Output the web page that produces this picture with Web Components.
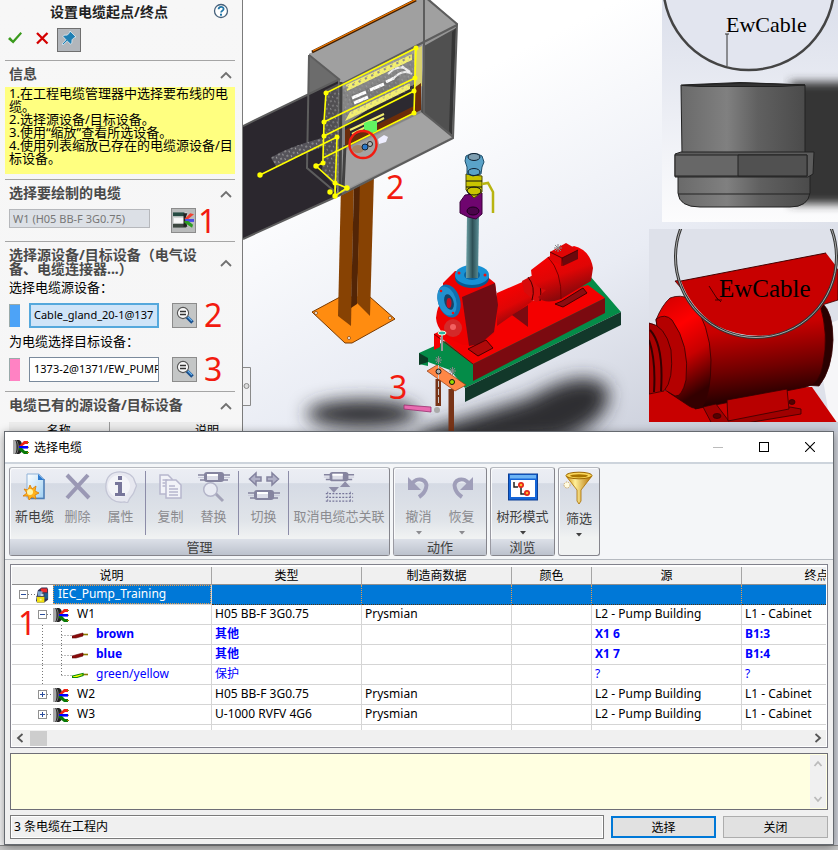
<!DOCTYPE html>
<html lang="zh-CN">
<head>
<meta charset="utf-8">
<title>选择电缆</title>
<style>
body{margin:0;font-family:"Noto Sans","Noto Sans CJK SC",sans-serif;font-size:12px;color:#000}
</style>
</head>
<body>
<cad-app></cad-app>
<script>
const define = (name, css, html, setup) => customElements.define(name, class extends HTMLElement {
  constructor() {
    super();
    this.attachShadow({mode: 'open'});
  }
  connectedCallback() {
    const t = document.createElement('template');
    t.innerHTML = `<style>*{box-sizing:border-box}${css}</style>` + (typeof html === 'function' ? html(this) : html);
    this.shadowRoot.replaceChildren(t.content.cloneNode(true));
    if (setup) setup(this);
  }
});

const plug = (a, b, y) => `<g transform="translate(0 ${y})"><path d="M0 4h32M2 9h28" stroke="${a}" stroke-width="1.5"/><path d="M0 6.500h32" stroke="#c9cada" stroke-width="1"/><rect x="6" y="1" width="20" height="10" rx="3" fill="${a}"/><rect x="9" y="3" width="11" height="6" fill="${b}"/><rect x="9" y="3" width="11" height="2" fill="#fff"/></g>`;
const ICONS = {
  help: ['0 0 16 16', `<circle cx="8" cy="8" r="6.500" fill="#fff" stroke="#45607a" stroke-width="1.300"/><path d="M5.600 6.300c0-3.300 5-3.200 5-.3 0 1.900-2.500 1.800-2.500 3.600" fill="none" stroke="#2277a8" stroke-width="1.800"/><rect x="7" y="10.700" width="2" height="2" fill="#2277a8"/>`],
  ok: ['0 0 16 16', `<path d="M1 9l2-2 3 3.200L13.500 2 15 3.500 6.200 13.500z" fill="#3a9a1c"/>`],
  cancel: ['0 0 16 16', `<path d="M3 3l10.500 10.500M13.500 3L3 13.500" stroke="#d40000" stroke-width="2.300"/>`],
  pin: ['0 0 16 16', `<path d="M9 1l6 6-1.600.4L11 9.800l-.2 3.400-1.400.8L6.200 11 2 15 1 14l4-4.200L2 6.500 3 5.200l3.300-.1L8.600 2.600z" fill="#1f7fb3" stroke="#eef6fb" stroke-width=".7"/>`],
  chevron: ['0 0 12 8', `<path d="M1 7l5-5 5 5" fill="none" stroke="#707070" stroke-width="1.800"/>`],
  cable: ['0 0 16 16', `<path d="M0 1h5c3 0 4 2 4 7s-1 7-4 7H0z" fill="#222"/><path d="M0 1h2c2 2 2 12 0 14H0z" fill="#aaa"/><path d="M3 1c3 3 3 11 0 14" stroke="#777" fill="none"/><path d="M6 7l5-5h4v3h-3L8 8z" fill="#e21"/><rect x="6" y="7" width="9" height="2.600" fill="#00f"/><path d="M6 9l3 0 3 3h3v3h-4L6 11z" fill="#087a08"/><path d="M14 3.500h2M15 8.300h1M14 13.500h2" stroke="#998000"/>`],
  cablepick: ['0 0 22 20', `<rect y="2" width="15" height="16" fill="#d5d7d6"/><rect y="2" width="12" height="4" fill="#254b42"/><rect x="1" y="8" width="11" height="5" fill="#f8f8f8"/><rect y="14" width="14" height="4" fill="#3c4740"/><path d="M11 3h4l-2 6 2 8h-4z" fill="#222"/><path d="M12 9l6-6 4 1-6 5z" fill="#f04030"/><rect x="13" y="9" width="9" height="3" fill="#4a48e8"/><path d="M12 11h4l5 4-1 3-8-5z" fill="#2d9b22"/>`],
  zoom: ['0 0 18 18', `<path d="M10.500 10.500l6 6" stroke="#194f8c" stroke-width="3.600"/><path d="M11.500 10.500l4.500 4.500" stroke="#6bb4ee" stroke-width="1.200"/><circle cx="7" cy="7" r="5.600" fill="#f6f6f6" stroke="#555" stroke-width="1.100"/><path d="M4 5.500h6M4 8.500h6" stroke="#333" stroke-width="1.400"/>`],
  newcable: ['0 0 32 32', `<defs><linearGradient id="g" x1="0" y1="0" x2="1" y2="1"><stop stop-color="#fff"/><stop offset="1" stop-color="#9fd0f2"/></linearGradient></defs><path d="M8 3h12l5 5v19H8z" fill="url(#g)" stroke="#8fb2d8"/><path d="M25 8v19.500H10" fill="none" stroke="#4d7eb5" stroke-width="1.500"/><path d="M19 3l6 6h-6z" fill="#2d7bd0"/><path d="M11 14l2 4 4-3-1 5 4 2-4 2 1 4-4-2-3 3-1-4-5 0 4-3-3-4 4 1z" fill="#ffb31c" stroke="#d97a00" stroke-width=".8"/><circle cx="11" cy="21" r="3" fill="#fff6a8"/>`],
  del: ['0 0 32 32', `<path d="M5 4l22 23M26 4L5 27" stroke="#9a98b4" stroke-width="4" fill="none"/>`],
  info: ['0 0 32 32', `<path d="M15 .8c8 0 13.500 4 14.500 9l2 5-2 5c-1 4-4 6-5 8l-2 4-3-1c-9 2-18.700-4-18.700-15S7 .8 15 .8z" fill="#e7e8f0" stroke="#c3c5d5" stroke-width="1.300"/><circle cx="14" cy="15" r="11" fill="#f3f4f8"/><path d="M13 5h4v4h-4zM10 11h7v11h3v3H10v-3h3v-8h-3z" fill="#77769a"/>`],
  copy: ['0 0 32 32', `<g fill="#f2f3f8" stroke="#b7b7cd" stroke-width="1.500"><path d="M5 4h8l4 4v15H5z"/><path d="M11 9h10l5 5v13H11z"/></g><path d="M7.500 9h5M7.500 12h3M7.500 15h3M14 15h6M14 18h9M14 21h9M14 24h9" stroke="#b7b7cd" stroke-width="1.300"/>`],
  replace: ['0 0 32 32', plug('#85849f', '#dcdde8', 0) + `<path d="M17 22l8 8" stroke="#a3a3b8" stroke-width="3"/><circle cx="12.500" cy="18.500" r="6.800" fill="#e9ebf3" stroke="#b3b4c8" stroke-width="1.500"/>`],
  swap: ['0 0 32 32', `<path d="M1.500 8L8 2v4h5v4H8v4zM30.500 8L24 2v4h-5v4h5v4z" fill="#b0b0c6" stroke="#84839f" stroke-width="1.500"/>` + plug('#85849f', '#dcdde8', 18)],
  unlink: ['0 0 32 34', plug('#85849f', '#dcdde8', 0) + `<path d="M5 17h11l-5.500 6zM17 17h11l-5.500-6z" fill="#8f8ea9"/><path d="M2 24h29M2 28h29M2 32h29" stroke="#77769a" stroke-width="1.300" stroke-dasharray="2 1.500"/><path d="M4 22v12M28 22v12" stroke="#77769a" stroke-dasharray="2 2"/>`],
  undo: ['0 0 32 32', `<path d="M8 14c6-10 18-5 15 3-1 4-4 7-7 9" stroke="#9f9eb9" stroke-width="4" fill="none"/><path d="M5 6v13h13z" fill="#9f9eb9"/>`],
  redo: ['0 0 32 32', `<path d="M24 14C18 4 6 9 9 17c1 4 4 7 7 9" stroke="#9f9eb9" stroke-width="4" fill="none"/><path d="M27 6v13H14z" fill="#9f9eb9"/>`],
  tree: ['0 0 32 32', `<rect x="1.500" y="3" width="29" height="26" fill="#1565d8" stroke="#0c3f95"/><rect x="3" y="4" width="26" height="3.500" fill="#6db4f4"/><rect x="4" y="9" width="24" height="17" fill="#fff"/><path d="M7 11v5h4M14 16v7h4" stroke="#222" stroke-width="1.500" fill="none"/><circle cx="14" cy="14" r="3" fill="#e5261a"/><circle cx="20" cy="22" r="3" fill="#e5261a"/><circle cx="14" cy="14" r="1.300" fill="#ffb52b"/><circle cx="20" cy="22" r="1.300" fill="#ffb52b"/>`],
  filter: ['0 0 32 36', `<defs><linearGradient id="f"><stop stop-color="#c98400"/><stop offset=".35" stop-color="#fff09a"/><stop offset="1" stop-color="#b26d00"/></linearGradient></defs><circle cx="4" cy="14" r="3" fill="#fffbe0" stroke="#c9a46a" stroke-dasharray="1.500 1"/><path d="M3 5l11 14v11l2 3 2-3V19L29 5z" fill="url(#f)" stroke="#a86d00" stroke-width=".8"/><ellipse cx="16" cy="4.500" rx="13" ry="3.300" fill="#fbd75a" stroke="#9b6500"/><ellipse cx="16" cy="4.800" rx="9" ry="1.600" fill="#a97400"/>`],
  project: ['0 0 14 16', `<path d="M2 3l4-3h6l1 2v11l-4 3H1l-1-2z" fill="#335"/><path d="M5 1h7v4H6z" fill="#f12b2b"/><rect x="9" y="6" width="4" height="6" fill="#225d8f"/><rect x="2" y="4" width="5" height="5" fill="#7fa8d0"/><rect x="1" y="10" width="8" height="6" fill="#f0e010"/><path d="M4 12h2v2H4z" fill="#fff9a0"/><path d="M0 9.500h9M8 5v5" stroke="#555" stroke-width=".8"/><rect x="5" y="7" width="3" height="2" fill="#cde"/>`],
  wire: ['0 0 16 8', `<path d="M11 3.500h5" stroke="#8a7a00" stroke-width="1.600"/><path d="M0 5l7-2 4-1v3L4 7H0z" fill="#8b0a0a" stroke="#5c0505" stroke-width=".6"/>`],
  wiregy: ['0 0 16 8', `<path d="M11 3.500h5" stroke="#8a7a00" stroke-width="1.600"/><path d="M.5 5l6-1.500 4.500-1v2L5 6.500H.5z" fill="#ff0" stroke="#0a8a0a" stroke-width="1.200"/>`],
  left: ['0 0 8 10', `<path d="M6.500 1L2 5l4.500 4" fill="none" stroke="#555" stroke-width="1.800"/>`],
  right: ['0 0 8 10', `<path d="M1.500 1L6 5 1.500 9" fill="none" stroke="#555" stroke-width="1.800"/>`],
  up: ['0 0 10 8', `<path d="M1.500 6L5 2l3.500 4" fill="none" stroke="#bbb" stroke-width="1.800"/>`],
  down: ['0 0 10 8', `<path d="M1.500 2L5 6l3.500-4" fill="none" stroke="#bbb" stroke-width="1.800"/>`],
  min: ['0 0 10 10', `<path d="M0 5.500h10" stroke="#bbb"/>`],
  max: ['0 0 10 10', `<rect x=".5" y=".5" width="9" height="9" fill="none" stroke="#000"/>`],
  close: ['0 0 10 10', `<path d="M0 0l10 10M10 0L0 10" stroke="#000" stroke-width="1.100"/>`],
  arrow: ['0 0 6 4', `<path d="M0 0h6L3 3.500z" fill="currentColor"/>`]
};
define('ui-icon', `:host{display:inline-block;flex:none;line-height:0}svg{display:block;width:100%;height:100%}`,
  el => { const [vb, body] = ICONS[el.getAttribute('name')]; return `<svg viewBox="${vb}" aria-hidden="true">${body}</svg>`; });

define('red-mark', `:host{display:block;color:#f21b10;font:32px/32px "Noto Sans",sans-serif}`, `<slot></slot>`);

/* ---- property panel ---- */
define('prop-section', `
:host{display:block;border-top:1px solid #a5a5a5;margin:0 7px 0 5px;padding:6px 0 0}
header{display:flex;align-items:center;justify-content:space-between;padding:0 3px 0 4px}
h2{margin:0;font:bold 14px/14px "Noto Sans","Noto Sans CJK SC",sans-serif;color:#4a4a4a;max-width:200px}
button{border:0;background:none;padding:0;width:12px;height:14px}
ui-icon{width:12px;height:8px}`,
  el => `<header><h2>${el.getAttribute('heading')}</h2><button aria-label="折叠"><ui-icon name="chevron"></ui-icon></button></header><slot></slot>`);

define('device-picker', `
:host{display:block;padding:0 4px}
label{display:block;font:13px/18px "Noto Sans","Noto Sans CJK SC",sans-serif}
.row{display:flex;align-items:center;margin-top:6px;height:26px}
i{width:11px;height:23px;background:var(--tone);border:1px solid #9aa;border-width:1px 0 0 1px;margin-right:9px}
input{width:130px;height:25px;border:1px solid #7a8a9c;padding:0 0 2px 4px;font:11px "Noto Sans",sans-serif;background:#fff;color:#000;border-radius:0;outline:0}
:host([active]) input{border:2px solid #55a8dc;background:#cfe4f8;padding-left:3px}
button{width:25px;height:25px;margin:0 7px 0 13px;border:1px solid #8c8c8c;background:#c4c6c6;padding:2px 0 0 1px}
ui-icon{width:18px;height:18px}`,
  el => `<label for="f">${el.getAttribute('label')}</label><div class="row"><i></i><input id="f" value="${el.getAttribute('value')}"><button aria-label="缩放"><ui-icon name="zoom"></ui-icon></button><slot></slot></div>`);

define('prop-panel', `
:host{display:block;background:linear-gradient(#f7f7f7,#f5f5f6);border-right:1px solid #7b7b7b;position:relative;overflow:hidden}
.title{display:flex;align-items:center;height:24px;padding:0 13px 0 5px}
h1{margin:0;flex:1;text-align:center;font:bold 14px/20px "Noto Sans","Noto Sans CJK SC",sans-serif;color:#222}
.title ui-icon{width:16px;height:16px}
.plain{border:0;background:none;padding:0}
.acts{display:flex;align-items:center;gap:11px;height:36px;padding:0 0 5px 7px}
.acts button{height:24px}
.acts .plain{width:16px}
.acts ui-icon{width:16px;height:16px}
.pin{width:24px;border:1px solid #6f6f6f;background:#b2b6bb;padding:0 2px;margin-left:-4px}
.note{margin:6px 0 5px;background:#ffff80;height:87px;padding:0 0 0 4px;font:13px/13px "Noto Sans","Noto Sans CJK SC",sans-serif}
.note p{margin:0}
.pick{display:flex;align-items:center;height:41px;padding:0 4px}
.pick input{width:141px;height:19px;border:1px solid #b6b8bc;background:#dce0e6;color:#777;font:11px "Noto Sans",sans-serif;padding:0 3px;margin:0 21px 4px 0}
.pick button{width:25px;height:25px;border:1px solid #8c8c8c;background:#b9bbbb;padding:1px;margin-right:2px}
.pick ui-icon{width:21px;height:20px}
.src{--tone:#4da3f7;padding-top:2px;height:56px}
.dst{--tone:#ff82c3;height:59px}
table{border-collapse:collapse;table-layout:fixed;margin:10px 0 0 4px;width:210px;background:#ececec;font:12px/16px "Noto Sans CJK SC",sans-serif}
th{font-weight:400;border-left:1px solid #999;padding:0;text-align:right}
th:first-child{border:0;width:100px;text-align:center}`,
`<div class="title"><h1>设置电缆起点/终点</h1><button class="plain" aria-label="帮助"><ui-icon name="help"></ui-icon></button></div>
<div class="acts"><button class="plain" aria-label="确定"><ui-icon name="ok"></ui-icon></button><button class="plain" aria-label="取消"><ui-icon name="cancel"></ui-icon></button><button class="pin" aria-label="保持可见"><ui-icon name="pin"></ui-icon></button></div>
<prop-section heading="信息"><div class="note"><p>1.在工程电缆管理器中选择要布线的电缆。</p><p>2.选择源设备/目标设备。</p><p>3.使用“缩放”查看所选设备。</p><p>4.使用列表缩放已存在的电缆源设备/目标设备。</p></div></prop-section>
<prop-section heading="选择要绘制的电缆"><div class="pick"><input aria-label="电缆" value="W1 (H05 BB-F 3G0.75)" disabled><button aria-label="选择电缆"><ui-icon name="cablepick"></ui-icon></button><red-mark>1</red-mark></div></prop-section>
<prop-section heading="选择源设备/目标设备（电气设备、电缆连接器...）"><device-picker active class="src" label="选择电缆源设备：" value="Cable_gland_20-1@137"><red-mark>2</red-mark></device-picker>
<device-picker class="dst" label="为电缆选择目标设备：" value="1373-2@1371/EW_PUMP"><red-mark>3</red-mark></device-picker></prop-section>
<prop-section heading="电缆已有的源设备/目标设备"><table><tr><th>名称</th><th>说明</th></tr></table></prop-section>`);

/* ---- 3D viewport ---- */
define('model-view', `
:host{display:block;background:#cfd2da;overflow:hidden}
svg{display:block;width:100%;height:auto}
.e{stroke:#5d5d5d;stroke-width:2;fill:none}
.y{stroke:#ff0;stroke-width:1.600;fill:none}
.d{fill:#ff0}
.k{stroke:#350000;stroke-width:.8}
text.m{font:32px "Noto Sans",sans-serif;fill:#f21b10}
text.c{font-family:"Liberation Serif",serif}`,
`<svg viewBox="243 0 595 432" role="img" aria-label="三维模型">
<defs>
<linearGradient id="bg" x1=".1" y1="0" x2=".8" y2="1"><stop offset=".25" stop-color="#fff"/><stop offset=".65" stop-color="#e9ecf4"/><stop offset="1" stop-color="#c9cdd9"/></linearGradient>
<linearGradient id="pp"><stop stop-color="#6fa3a8"/><stop offset=".5" stop-color="#2d5056"/><stop offset="1" stop-color="#5d9299"/></linearGradient>
<linearGradient id="mo" x1=".3" y1="0" x2=".7" y2="1"><stop stop-color="#f00"/><stop offset=".5" stop-color="#e00505"/><stop offset="1" stop-color="#6b090d"/></linearGradient>
<linearGradient id="gl"><stop stop-color="#6a6a6a"/><stop offset=".37" stop-color="#808080"/><stop offset=".62" stop-color="#606060"/><stop offset="1" stop-color="#4b4b4b"/></linearGradient>
<linearGradient id="ib" x1="0" y1="0" x2="0" y2="1"><stop stop-color="#dbdfeb"/><stop offset="1" stop-color="#fcfcfd"/></linearGradient>
<linearGradient id="mb" x1="0" y1="0" x2=".15" y2="1"><stop stop-color="#e80000"/><stop offset=".35" stop-color="#c80000"/><stop offset=".7" stop-color="#700000"/><stop offset="1" stop-color="#1b0000"/></linearGradient>
<linearGradient id="mf" x1="0" y1="0" x2=".3" y2="1"><stop stop-color="#c00"/><stop offset=".35" stop-color="#f00"/><stop offset=".65" stop-color="#c80000"/><stop offset="1" stop-color="#300"/></linearGradient>
<filter id="b" x="-30%" y="-80%" width="160%" height="260%"><feGaussianBlur stdDeviation="9"/></filter><filter id="b2"><feGaussianBlur stdDeviation="5"/></filter>
<pattern id="sp" width="7" height="5" patternUnits="userSpaceOnUse" patternTransform="rotate(-26)"><rect x="0" y="0" width="2" height="2" fill="#999"/><rect x="4" y="2" width="1" height="2" fill="#bbb"/><rect x="2" y="4" width="1" height="1" fill="#555"/></pattern>
<clipPath id="c1"><rect x="662" y="0" width="176" height="222"/></clipPath><clipPath id="c2"><rect x="649" y="229" width="189" height="193"/></clipPath>
</defs>
<rect x="243" width="595" height="432" fill="url(#bg)"/>
<g filter="url(#b)" fill="#2f2f33"><ellipse cx="362" cy="414" rx="56" ry="14"/><path d="M420 432L530 398Q585 365 608 388Q614 420 560 440L420 450z"/></g>
<!-- post -->
<path d="M312 312L340 297H370L395 319L352 343H345z" fill="#ff8c10" stroke="#7a3a00"/>
<path d="M341 185L354 180L351 326L338 316z" fill="#874203"/><path d="M354 180H361L357 304L351 308z" fill="#532506"/><path d="M360 180L374 175L370 316L357 303z" fill="#874203"/>
<g fill="#fff" stroke="#7a3a00" stroke-width=".7"><circle cx="316" cy="313" r="1.500"/><circle cx="349" cy="338" r="1.500"/><circle cx="390" cy="318" r="1.500"/></g>
<!-- cabinet -->
<path d="M309 54L425 -5L457 24L453 137L340 196L307 168z" fill="#969696"/>
<path d="M309 54L425 -4L457 24L342 84z" fill="#a0a0a0"/>
<path d="M309 56L340 80V150L308 165z" fill="#6c6c6c"/>
<path d="M424 46L456 28L452 135L421 112z" fill="#505050"/>
<path d="M452 32L456 28L452 135L449 131z" fill="#353535"/>
<path d="M341 90L421 50V113L342 150z" fill="#858585"/>
<path d="M414 50L422 46V86L414 90z" fill="#d8d070"/>
<path d="M370 108L415 84V108L345 142V125z" fill="#2c2930"/>
<path d="M414 88L421 83V110L345 148V130L350 127V138L414 106z" fill="#6b2c0a"/>
<path d="M343 152L421 113L453 137L342 191z" fill="#a3a3a3"/>
<path d="M346 85L412 54V60L347 91z" fill="#f3ef70"/><path d="M350 112L410 83V89L345 121z" fill="#f3ef70"/><path d="M350 130L384 114M352 134L384 118" stroke="#f3ef70" stroke-width="2"/>
<path d="M350 96L398 75L400 85L352 108z" fill="#777"/><path d="M352 98L366 92M370 90L384 84M354 103L368 97M386 82L394 78" stroke="#fff" stroke-width="3"/><path d="M388 74q12-12 22-2M392 80q10-12 20-6M402 66l8 7" stroke="#eee" stroke-width="2" fill="none"/>
<path d="M346 88L410 57" stroke="#888" stroke-width="2" stroke-dasharray="2 5"/>
<path d="M342 84L415 50V88L345 120z" fill="url(#sp)" opacity=".4"/>
<path d="M312 52L416 0" stroke="#432000" stroke-width="3"/><path d="M313 51L417 -1" stroke="#f57a00" stroke-width="1.200"/>
<path d="M243 126L338 80L337 196L243 239z" fill="#2b272e"/>
<path class="e" d="M243 126L338 80M243 239L340 195L453 138L457 24L425 -3M309 55L307 168L340 196M309 55L340 80M424 0V113L453 137M457 25L342 84"/>
<path d="M325 90L341 82L340 192L322 172z" fill="#6b6b6b" opacity=".6"/><path d="M325 95L340 88V190L323 172z" fill="url(#sp)" opacity=".5"/>
<path d="M271 158Q285 148 322 138L325 146L298 156L276 166z" fill="#55535a"/><path d="M270 158Q285 148 322 138L325 146L298 156L276 166z" fill="url(#sp)" opacity=".7"/><path d="M341 82L340 195M345 145L343 190" stroke="#424242" stroke-width="3"/>
<path class="y" d="M416 48L326 93L324 122L323 158V163L316 166L335 183L347 188L335 196M416 48L415 78L414 113L323 158M324 122L415 78M324 136L414 91M260 175L337 137L335 196M335 183V196"/>
<g class="d"><circle cx="416" cy="48" r="2.500"/><circle cx="326" cy="93" r="2.500"/><circle cx="324" cy="122" r="2.500"/><circle cx="324" cy="136" r="2.500"/><circle cx="415" cy="78" r="2.500"/><circle cx="414" cy="91" r="2.500"/><circle cx="414" cy="113" r="2.500"/><circle cx="260" cy="175" r="2.700"/><circle cx="337" cy="137" r="2.500"/><circle cx="316" cy="166" r="2.700"/><circle cx="347" cy="188" r="2.700"/><circle cx="335" cy="196" r="2.700"/><circle cx="330" cy="192" r="2.700"/><circle cx="335" cy="183" r="2.500"/><circle cx="323" cy="163" r="2.500"/></g>
<path d="M364 123q6-3 13-2v10l-8 3-5-5z" fill="#62f562"/><path d="M378 139l6-4 4 2-2 5-7 2z" fill="#eef"/>
<ellipse cx="358" cy="149" rx="6" ry="4" fill="#a48466"/><circle cx="365" cy="147" r="3" fill="#2c79c8" stroke="#123"/><circle cx="370" cy="144" r="2.500" fill="#bbb" stroke="#222"/>
<circle cx="363" cy="144.500" r="13.500" fill="none" stroke="#f21b10" stroke-width="2.400"/>
<!-- skid -->
<path d="M419 353L590 276L621 312L465 388L450 370L428 362V366L419 364z" fill="#048c48"/><path d="M419 353L428 358V362L419 365z" fill="#0b3c25"/>
<path d="M465 388L621 312V325L465 402z" fill="#12382a"/>
<path d="M434 334L440 331L500 310L588 285L605 298L473 364L440 337V347L434 350z" fill="#f40000"/><path d="M473 364L605 298V313L473 381z" fill="#7b0a10"/><path d="M434 334L473 364" stroke="#700"/>
<!-- pump -->
<path d="M497 293L527 280L534 300L497 326z" fill="url(#mo)"/><path d="M512 315L528 305V327z" fill="#7c0a10"/>
<path d="M522 281L535 274L546 276L548 298L536 302L524 292z" fill="#d80b0b"/><path d="M528 277q8 10 4 23M535 274q8 10 5 27" stroke="#400" fill="none"/>
<path d="M531 270L548 257L574 246Q590 250 593 268L591 281L561 299Q545 305 538 297L546 290Q532 288 531 270z" fill="url(#mo)"/><path d="M548 257q14 15 13 42" stroke="#7a0000" fill="none"/>
<path d="M550 252L566 243L578 250V259L563 266L550 260z" fill="#e00505"/><path d="M562 258L578 250V259L563 266z" fill="#6c080c"/><path class="k" d="M550 252L562 258L578 250M562 258V266" fill="none"/>
<path d="M562 301L583 288L587 293L563 307L555 304z" fill="#8c0c10" stroke="#400"/>
<path d="M443 283L455 271L485 275L495 283L498 305L494 334L480 345H463Q437 335 436 318Q437 306 443 300z" fill="#ee0000"/>
<path d="M462 297L495 283L498 305L494 332L480 344L469 346Z" fill="#710c14"/><circle cx="453" cy="328" r="9" fill="#d32a2a"/><circle cx="453" cy="327" r="3" fill="#f26161"/>
<path d="M468 349L486 340L493 348L478 356z" fill="#b00a0a" stroke="#400"/>
<ellipse cx="472" cy="278" rx="17" ry="10" fill="#075a91"/><ellipse cx="472" cy="275" rx="17" ry="10" fill="#1791d4"/><ellipse cx="472" cy="275" rx="8" ry="5" fill="#0b64a0"/>
<ellipse cx="449" cy="301" rx="11" ry="17" transform="rotate(-17 449 301)" fill="#0f6fae"/><ellipse cx="447" cy="301" rx="9" ry="15" transform="rotate(-17 447 301)" fill="#2291cf"/><ellipse cx="449" cy="302" rx="4.500" ry="8" transform="rotate(-17 449 302)" fill="#14456a"/><ellipse cx="449" cy="303" rx="2.500" ry="5" fill="#c91020"/>
<g fill="#e11" ><circle cx="459" cy="273" r="1.500"/><circle cx="485" cy="275" r="1.500"/><circle cx="441" cy="291" r="1.300"/><circle cx="453" cy="313" r="1.300"/></g>
<path d="M467 216H479L478 278H466z" fill="url(#pp)"/>
<path d="M465 195L482 193V214L476 219L468 217L460 213V202z" fill="#6f056f" stroke="#3a003a"/><ellipse cx="473" cy="211" rx="6" ry="4" fill="#4b044b" stroke="#1c001c"/>
<path d="M466 174L482 176V192L474 198L466 190z" fill="#c9c400" stroke="#504d00"/><path d="M466 181H482M466 187H482" stroke="#111"/><path d="M482 184L488 183L493 192V213" fill="none" stroke="#b8b411" stroke-width="2.500"/>
<ellipse cx="474" cy="191" rx="7" ry="4" fill="none" stroke="#111"/>
<path d="M466 156q8-5 16 0l2 6-2 5-1 7-8 2-6-2V167l-2-6z" fill="#5aa3c9" stroke="#1d4d69"/><ellipse cx="474" cy="157" rx="6" ry="3.500" fill="#7e9eb0" stroke="#123"/><ellipse cx="474" cy="172" rx="6" ry="3.500" fill="none" stroke="#123"/>
<path d="M442 333V351" stroke="#999" stroke-width="2"/><ellipse cx="442" cy="333" rx="4" ry="2" fill="#29b5a5" stroke="#ffd"/>
<path d="M435.500 379H441V406H435.500zM448.500 389H454V432H448.500z" fill="#783418"/>
<path d="M427 371L437 365L466 385L455 391z" fill="#ff8746" stroke="#8e3a12" stroke-width=".7"/>
<path d="M438.500 365V404" stroke="#ccc" stroke-width="1" stroke-dasharray="6 2"/>
<circle cx="438.500" cy="371.500" r="2.500" fill="#aaa" stroke="#111"/><circle cx="452" cy="382" r="2.500" fill="#9d0" stroke="#111"/>
<g stroke="#888"><path d="M435 360h7M438.500 356v8M436 357l5 6M441 357l-5 6"/><path d="M449 371h7M452.500 367v8M450 368l5 6M455 368l-5 6"/><path d="M554 248h8M558 244v8M555 245l6 6M561 245l-6 6"/></g>
<path d="M404 405L431 407V412L404 409z" fill="#e86bb0" stroke="#9b2d6e" stroke-width=".8"/><circle cx="437" cy="410" r="3" fill="#aaa"/>
<text class="m" x="386" y="199">2</text><text class="m" x="389" y="399">3</text>
<!-- gland detail -->
<g clip-path="url(#c1)"><rect x="662" width="176" height="222" fill="url(#ib)"/><rect x="790" y="82" width="70" height="122" fill="#343436" filter="url(#b2)"/>
<circle cx="748.700" cy="-15.400" r="85.500" fill="#e2e5ef" stroke="#444" stroke-width="2.500"/>
<g stroke="#222"><path d="M681 85L740 82.500L805 85V155H682z" fill="url(#gl)"/><path d="M682 85.500L745 83L805 85L780 86.500H700z" fill="#333"/><path d="M678 173H810V193Q808 207 790 207H700Q679 207 678 193z" fill="url(#gl)"/><path d="M678 194H810" /><path d="M675 154L681 152H805L814 152L813 174L808 177H675z" fill="#5c5c5c"/><path d="M675 155H807V176H675z" fill="#676767"/><path d="M738 155H807V176H738z" fill="#515151"/></g>
<path d="M727 66V34M725 34h4" stroke="#333" fill="none"/><text class="c" x="726" y="32" font-size="22">EwCable</text></g>
<!-- motor detail -->
<g clip-path="url(#c2)"><rect x="649" y="229" width="189" height="193" fill="#dee1ea"/><path d="M815 330L838 320V422H830z" fill="#f6f6f8"/><path d="M649 393L668 390L812 387L838 424H649z" fill="#c80000"/>
<path d="M675 281L825 253L838 270V300L822 305L700 310z" fill="#c80000" class="k"/>
<path class="k" d="M822 303Q833 312 833 340Q832 370 819 386L805 385z" fill="#2a0000"/>
<path class="k" d="M690 295L820 305Q829 335 823 364Q820 384 806 387L695 409z" fill="url(#mb)"/>
<path class="k" d="M656 320Q662 305 670 298Q680 294 691 299Q710 325 711 360Q711 395 702 407Q695 410 689 406L668 392z" fill="url(#mf)"/>
<path class="k" d="M656 319Q665 313 672 320Q690 345 686 380Q682 397 675 396L665 390z" fill="#b40000"/>
<path class="k" d="M649 323Q665 325 671 350Q674 380 664 391L649 394z" fill="#a80000"/><path d="M650 330Q664 345 661 391M649 340Q656 360 654 392" stroke="#300" stroke-width="2" fill="none"/>
<path class="k" d="M703 407L716 404L728 420L790 407L801 409V414L740 424H712z" fill="#a00000"/><path class="k" d="M727 400L787 389L789 409L728 421z" fill="#b80000"/><g fill="#500" class="k"><ellipse cx="717" cy="416" rx="4" ry="2.500"/><ellipse cx="792" cy="402" rx="3" ry="2.500"/></g>
<circle cx="756" cy="257" r="80" fill="#dee1ea"/><path d="M681 281L826 253L836 266Q833 310 795 328Q755 345 715 325Q690 307 681 281z" fill="#c80000"/><path d="M681 281L826 253" stroke="#400"/>
<circle cx="756" cy="257" r="80.500" fill="none" stroke="#333" stroke-width="3"/><circle cx="756" cy="257" r="80.500" fill="none" stroke="#aaa" stroke-width="1"/>
<path d="M709 286L718 300M715 300h7M716 297l5 5" stroke="#400" fill="none"/><text class="c" x="719" y="297" font-size="25">EwCable</text></g>
<!-- splitter tab -->
<path d="M243 367.500H250.500V405.500H243" fill="#f1f1f3" stroke="#8a8a8a"/><circle cx="246.500" cy="386" r="2.500" fill="#ddd" stroke="#888"/>
</svg>`);

/* ---- ribbon ---- */
define('ribbon-button', `
:host{display:block;flex:none;width:43px}
button{width:100%;height:100%;border:0;background:none;padding:3px 0 0;display:flex;flex-direction:column;align-items:center;color:#404040;font:13px/18px "Noto Sans CJK SC",sans-serif;white-space:nowrap}
:host([off]) button{color:#8b8b8f}
.i{width:32px;height:32px}
span{margin-top:4px}
.a{width:6px;height:4px;margin-top:6px}
:host([tall]) .i{height:36px}
:host([tall]) span{margin-top:2px}`,
  el => `<button><ui-icon class="i" name="${el.getAttribute('icon')}"></ui-icon><span>${el.getAttribute('label')}</span>${el.hasAttribute('menu') ? '<ui-icon class="a" name="arrow"></ui-icon>' : ''}</button>`);
define('ribbon-group', `
:host{display:flex;flex-direction:column;height:89px;border:1px solid #9a9aa2;border-top-color:#b7bac0;border-right-color:#85858c;border-bottom-color:#85858c;border-radius:3px;background:linear-gradient(#eceef4,#e7eaf1 17%,#d5dae4 18%,#e0e4e9 60%,#f0f2f2 80%);box-shadow:inset 1px 1px #fafbfc}
.b{display:flex;flex:1;padding:0 3px}
footer{height:16px;text-align:center;color:#404040;font:13px/15px "Noto Sans CJK SC",sans-serif;background:linear-gradient(#dce0e8,#bcc2cd)}`,
  el => `<div class="b"><slot></slot></div>${el.hasAttribute('caption') ? `<footer>${el.getAttribute('caption')}</footer>` : ''}`);
define('ribbon-bar', `
:host{display:flex;gap:3px;padding:3px 4px 3px;background:#f4f6f8;border-top:2px solid #cdd4dc;border-bottom:1px solid #b5bac0}
hr{border:0;width:1px;height:64px;margin:3px;background:#8c8ca8}
.w94{width:94px}.w57{width:57px}.w34{width:34px}`,
`<ribbon-group caption="管理"><ribbon-button icon="newcable" label="新电缆"></ribbon-button><ribbon-button off icon="del" label="删除"></ribbon-button><ribbon-button off icon="info" label="属性"></ribbon-button><hr><ribbon-button off icon="copy" label="复制"></ribbon-button><ribbon-button off icon="replace" label="替换"></ribbon-button><hr><ribbon-button off icon="swap" label="切换"></ribbon-button><hr><ribbon-button off class="w94" icon="unlink" label="取消电缆芯关联"></ribbon-button></ribbon-group>
<ribbon-group caption="动作"><ribbon-button off menu icon="undo" label="撤消"></ribbon-button><ribbon-button off menu icon="redo" label="恢复"></ribbon-button></ribbon-group>
<ribbon-group caption="浏览"><ribbon-button menu class="w57" icon="tree" label="树形模式"></ribbon-button></ribbon-group>
<ribbon-group><ribbon-button menu tall class="w34" icon="filter" label="筛选"></ribbon-button></ribbon-group>`);

/* ---- cable grid ---- */
define('tree-node', `
:host{display:flex;height:19px;align-items:stretch}
svg{flex:none;display:block}
.g{fill:none;stroke:#777;stroke-dasharray:1 2}
button{flex:none;width:9px;height:9px;margin-top:5px;border:1px solid #919191;background:#fff;padding:0;display:block;line-height:0}
button svg{width:7px;height:7px}
.ic{align-self:center}
.t{padding:0 5px;flex:1;line-height:17px}
:host([level="0"]) .t{color:#fff;background:#0078d7;outline:1px dotted #e79a4a;outline-offset:-1px}`,
  el => {
    const lv = +el.getAttribute('level'), k = el.getAttribute('icon'), last = el.hasAttribute('last'), open = el.hasAttribute('open');
    const sign = `<svg viewBox="0 0 7 7"><path d="M1 3.500h5${open ? '' : 'M3.500 1v5'}" stroke="#2a4d9c"/></svg>`;
    if (lv === 2) return `<svg width="60" height="19"><path class="g" d="M30.500 0V20M49.500 0V${last ? 10 : 20}M49.500 10.500H60"/></svg><ui-icon class="ic" name="${k}" style="width:16px;height:8px"></ui-icon><span class="t" style="margin-left:3px"><slot></slot></span>`;
    const w = lv ? 26 : 7;
    return `<svg width="${w}" height="19"></svg><button aria-label="展开或折叠">${sign}</button><svg width="${lv ? 6 : 8}" height="19"><path class="g" d="M0 9.500H8"/></svg><ui-icon class="ic" name="${k}" style="width:${lv ? 16 : 13}px;height:16px"></ui-icon><span class="t" style="margin-left:${lv ? 3 : 4}px"><slot></slot></span>`;
  });
define('cable-grid', `
:host{display:block;border:1px solid #82828c;background:#fff;padding:2px 1px 1px;overflow:hidden}
.v{overflow:hidden;height:163px}
table{width:880px;table-layout:fixed;border-collapse:separate;border-spacing:0;font:12px/16px "Noto Sans","Noto Sans CJK SC",sans-serif}
th{height:18px;padding:1px 0 0;font-weight:400;background:#f0f0f0;border-bottom:1px solid #8f8f8f;border-right:1px solid #a5a5a5}
td{height:20px;padding:0 3px 2px;border-right:1px solid #d5d5d5;border-bottom:1px solid #d5d5d5;white-space:nowrap;overflow:hidden;line-height:17px}
td:first-child{padding:0}
tr.s td:not(:first-child){background:#0078d7;border-right:1px dotted #e79a4a;border-bottom:1px dotted #503010}
tr.f td{height:7px;border-bottom:0}
.bl{color:#00f}.b{color:#00f;font-weight:700}
.sb{height:16px;background:#f0f0f0;display:flex;align-items:center;padding:0 4px;gap:6px}
.sb ui-icon{width:8px;height:10px}.sb i{width:17px;height:15px;background:#cdcdcd}.sb b{flex:1}`,
() => {
  const rows = [
    ['s', '<tree-node level="0" icon="project" open>IEC_Pump_Training</tree-node>', '', '', '', '', ''],
    ['', '<tree-node level="1" icon="cable" open>W1</tree-node>', 'H05 BB-F 3G0.75', 'Prysmian', '', 'L2 - Pump Building', 'L1 - Cabinet'],
    ['b', '<tree-node level="2" icon="wire">brown</tree-node>', '其他', '', '', 'X1 6', 'B1:3'],
    ['b', '<tree-node level="2" icon="wire">blue</tree-node>', '其他', '', '', 'X1 7', 'B1:4'],
    ['bl', '<tree-node level="2" icon="wiregy" last>green/yellow</tree-node>', '保护', '', '', '?', '?'],
    ['', '<tree-node level="1" icon="cable">W2</tree-node>', 'H05 BB-F 3G0.75', 'Prysmian', '', 'L2 - Pump Building', 'L1 - Cabinet'],
    ['', '<tree-node level="1" icon="cable">W3</tree-node>', 'U-1000 RVFV 4G6', 'Prysmian', '', 'L2 - Pump Building', 'L1 - Cabinet'],
    ['f', '', '', '', '', '', '']
  ];
  return `<div class="v"><table><colgroup><col style="width:200px"><col style="width:150px"><col style="width:150px"><col style="width:80px"><col style="width:150px"><col></colgroup>
<thead><tr>${['说明', '类型', '制造商数据', '颜色', '源', '终点'].map(h => `<th>${h}</th>`).join('')}</tr></thead>
<tbody>${rows.map(([c, ...r]) => `<tr class="${c}">${r.map(x => `<td>${x}</td>`).join('')}</tr>`).join('')}</tbody></table></div>
<div class="sb"><ui-icon name="left"></ui-icon><i></i><b></b><ui-icon name="right"></ui-icon></div>`;
});

/* ---- dialog ---- */
define('cable-dialog', `
:host{display:block;background:#f0f0f0;border:1px solid #666a70;box-shadow:0 2px 9px rgba(0,0,0,.4)}
header{display:flex;align-items:center;height:30px;background:#fff;padding-left:8px}
header>ui-icon{width:16px;height:16px;margin-right:5px}
h1{margin:0;flex:1;font:12px/20px "Noto Sans CJK SC",sans-serif}
header button{width:46px;height:30px;border:0;background:none;padding:0}
header button ui-icon{width:10px;height:10px}
main{padding:4px 5px 5px}
.msg{display:flex;margin-top:5px;height:57px;border:1px solid #6e6e76;background:#ffffe1;padding:1px}
textarea{flex:1;border:0;background:none;resize:none;padding:2px;outline:0}
.sc{width:16px;background:#f0f0f0;display:flex;flex-direction:column;justify-content:space-between;align-items:center;padding:5px 0}
.sc ui-icon{width:10px;height:8px}
.foot{display:flex;gap:7px;margin-top:5px;align-items:center}
output{flex:1;height:24px;border:1px solid #7a7a7a;box-shadow:inset 0 0 0 1px #fff;padding-left:3px;font:12px/21px "Noto Sans","Noto Sans CJK SC",sans-serif}
.foot button{width:105px;height:22px;padding:0;border:1px solid #adadad;background:#e1e1e1;font:12px/18px "Noto Sans CJK SC",sans-serif;color:#000}
.foot .p{border:2px solid #0078d7}
red-mark{position:absolute;left:13px;top:175px}`,
`<header><ui-icon name="cable"></ui-icon><h1>选择电缆</h1><button aria-label="最小化"><ui-icon name="min"></ui-icon></button><button aria-label="最大化"><ui-icon name="max"></ui-icon></button><button aria-label="关闭窗口"><ui-icon name="close"></ui-icon></button></header>
<ribbon-bar></ribbon-bar>
<main><cable-grid></cable-grid>
<div class="msg"><textarea aria-label="说明" readonly></textarea><div class="sc"><ui-icon name="up"></ui-icon><ui-icon name="down"></ui-icon></div></div>
<div class="foot"><output>3 条电缆在工程内</output><button class="p">选择</button><button>关闭</button></div></main>
<red-mark>1</red-mark>`);

define('cad-app', `
:host{display:grid;grid-template-columns:243px 1fr;grid-template-rows:1fr auto;min-height:100vh;position:relative;overflow:hidden}
footer{grid-column:1/3;height:5px;background:#c6c6c6;border-top:1px solid #888}
cable-dialog{position:absolute;left:4px;right:4px;top:431px}`,
`<prop-panel></prop-panel><model-view></model-view><footer></footer><cable-dialog></cable-dialog>`);
</script>
</body>
</html>
